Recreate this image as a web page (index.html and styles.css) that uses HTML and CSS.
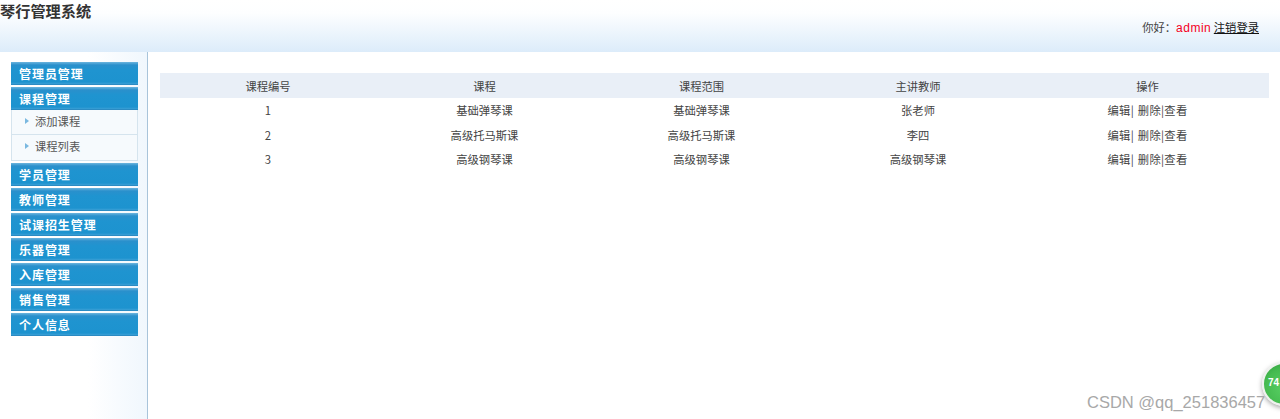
FILE: index.html
```html
<!DOCTYPE html>
<html lang="zh">
<head>
<meta charset="utf-8">
<title>琴行管理系统</title>
<link rel="stylesheet" href="styles.css">
</head>
<body>
<header class="top">
  <h1 class="brand">琴行管理系统</h1>
  <div class="user">你好：<span class="name">admin</span> <a class="logout" href="#">注销登录</a></div>
</header>
<div class="body">
  <nav class="side">
    <div class="menu-head">管理员管理</div>
    <div class="menu-group">
      <div class="menu-head">课程管理</div>
      <ul class="sub">
        <li class="sub-item">添加课程</li>
        <li class="sub-item">课程列表</li>
      </ul>
    </div>
    <div class="menu-head">学员管理</div>
    <div class="menu-head">教师管理</div>
    <div class="menu-head">试课招生管理</div>
    <div class="menu-head">乐器管理</div>
    <div class="menu-head">入库管理</div>
    <div class="menu-head">销售管理</div>
    <div class="menu-head">个人信息</div>
  </nav>
  <main class="main">
    <table class="grid">
      <colgroup><col class="c1"><col class="c2"><col class="c3"><col class="c4"><col class="c5"></colgroup>
      <thead>
        <tr><th>课程编号</th><th>课程</th><th>课程范围</th><th>主讲教师</th><th>操作</th></tr>
      </thead>
      <tbody>
        <tr><td>1</td><td>基础弹琴课</td><td>基础弹琴课</td><td>张老师</td><td class="ops">编辑| 删除|查看</td></tr>
        <tr><td>2</td><td>高级托马斯课</td><td>高级托马斯课</td><td>李四</td><td class="ops">编辑| 删除|查看</td></tr>
        <tr><td>3</td><td>高级钢琴课</td><td>高级钢琴课</td><td>高级钢琴课</td><td class="ops">编辑| 删除|查看</td></tr>
      </tbody>
    </table>
  </main>
</div>
<div class="ball"><span class="ball-text">74</span></div>
<div class="mark">CSDN @qq_251836457</div>
</body>
</html>
```
FILE: styles.css
```css
* { box-sizing: border-box; }
html, body { margin: 0; padding: 0; height: 100%; overflow: hidden; }
body {
  background: #fff;
  color: #444;
  font-family: "Noto Sans CJK SC", "Liberation Sans", sans-serif;
  font-size: 11.3px;
  display: flex;
  flex-direction: column;
}
.top {
  height: 52px;
  flex: none;
  background: linear-gradient(to bottom, #fff 0%, #fdfeff 25%, #dcecfa 100%);
  display: flex;
  justify-content: space-between;
}
.brand {
  margin: 0;
  font-size: 15.2px;
  line-height: 20px;
  font-weight: 700;
  color: #333;
}
.user {
  padding: 19px 21px 0 0;
  line-height: 17px;
  color: #444;
}
.name { color: #f5001e; font-family: "Liberation Sans", sans-serif; font-size: 12px; letter-spacing: 0.5px; }
.logout { color: #111; text-decoration: underline; }
.body { flex: 1; display: flex; min-height: 0; }
.side {
  width: 148px;
  flex: none;
  padding: 10px 9px 0 11px;
  border-right: 1px solid #a8c4da;
  background: linear-gradient(to right, #fff 0%, #fff 60%, #f0f7fd 100%);
  display: flex;
  flex-direction: column;
  gap: 2px;
}
.menu-head {
  height: 23px;
  padding-left: 8px;
  color: #fff;
  font-size: 12px;
  font-weight: 700;
  letter-spacing: 0.95px;
  line-height: 23px;
  background: linear-gradient(to bottom, #6db5de 0, #2a90cc 3px, #1f94d0 8px, #1d93cf 20px, #4aa5d8 23px);
  border-bottom: 1px solid #2b8bc3;
}
.sub {
  list-style: none;
  margin: 0;
  padding: 0;
  border: 1px solid #d5e4ee;
  border-top: 0;
  background: #f6fafd;
}
.sub-item {
  height: 24px;
  line-height: 23px;
  padding-left: 23px;
  color: #555;
  position: relative;
}
.sub-item + .sub-item { height: 26px; line-height: 22px; border-top: 1px solid #d5e4ee; }
.sub-item::before {
  content: "";
  position: absolute;
  left: 13px;
  top: 8px;
  border-left: 4px solid #7ab8e0;
  border-top: 3.5px solid transparent;
  border-bottom: 3.5px solid transparent;
}
.main { flex: 1; min-width: 0; padding: 21px 11px 0 12px; }
.grid { width: 1109px; border-collapse: collapse; table-layout: fixed; }
.c1 { width: 216px; }
.c2 { width: 217px; }
.c3 { width: 217px; }
.c4 { width: 216px; }
.c5 { width: 243px; }
.grid th {
  height: 25px;
  padding: 0;
  font-weight: 400;
  text-align: center;
  color: #444;
  background: #e9eff7;
}
.grid td {
  height: 24.4px;
  padding: 0;
  text-align: center;
  color: #444;
}
.grid .ops { letter-spacing: 0.3px; word-spacing: 1px; }
.ball {
  position: absolute;
  left: 1262px;
  top: 362px;
  width: 44px;
  height: 44px;
  border-radius: 50%;
  border: 2px solid #eef1ee;
  background: radial-gradient(circle at 50% 60%, #58cf63 0%, #45bb50 60%, #2f9c3c 100%);
  box-shadow: 0 2px 5px rgba(0,0,0,.35);
  color: #fff;
  font: 700 10px/38px "Liberation Sans", sans-serif;
  padding-left: 4px;
}
.mark {
  position: absolute;
  left: 1087px;
  top: 392px;
  font: 16.5px/20px "Liberation Sans", sans-serif;
  color: #a8a8a8;
  white-space: nowrap;
}
```
